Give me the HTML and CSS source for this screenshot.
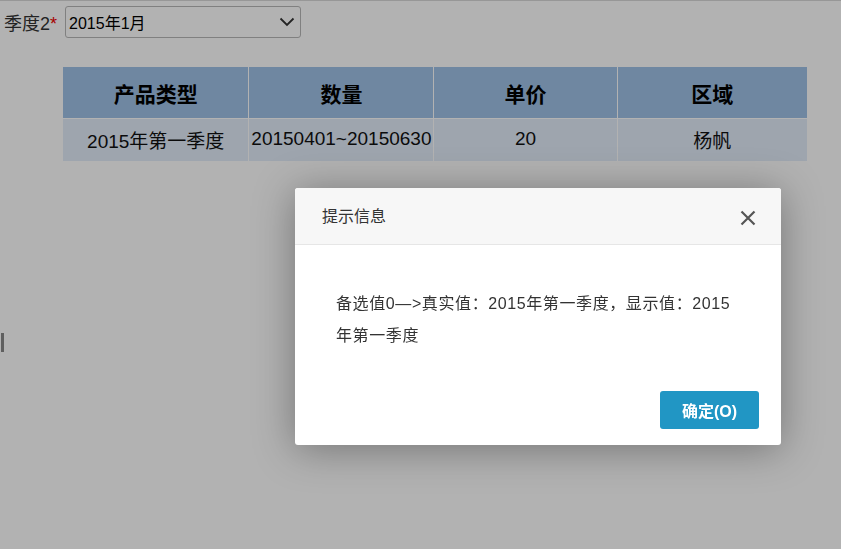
FILE: index.html
```html
<!DOCTYPE html>
<html>
<head>
<meta charset="utf-8">
<link rel="stylesheet" href="styles.css">
</head>
<body>
  <div class="filter">
    <span class="label">季度2<em>*</em></span>
    <div class="select">
      <span>2015年1月</span>
      <svg width="16" height="10" viewBox="0 0 16 10"><path d="M1.5 1.5 L8 8 L14.5 1.5" fill="none" stroke="#333" stroke-width="1.8"/></svg>
    </div>
  </div>

  <table class="report">
    <tr class="head">
      <th class="c1">产品类型</th>
      <th class="c2">数量</th>
      <th class="c3">单价</th>
      <th class="c4">区域</th>
    </tr>
    <tr class="data">
      <td>2015年第一季度</td>
      <td>20150401~20150630</td>
      <td>20</td>
      <td>杨帆</td>
    </tr>
  </table>

  <div class="handle"></div>
  <div class="mask"></div>

  <div class="dialog">
    <div class="dlg-head">
      <span class="dlg-title">提示信息</span>
      <svg class="dlg-close" width="16" height="16" viewBox="0 0 16 16"><path d="M1.5 1.5 L14.5 14.5 M14.5 1.5 L1.5 14.5" stroke="#555" stroke-width="2.2"/></svg>
    </div>
    <div class="dlg-body">备选值0—>真实值：2015年第一季度，显示值：2015年第一季度</div>
    <div class="dlg-foot">
      <button class="btn-ok">确定(O)</button>
    </div>
  </div>
</body>
</html>
```

FILE: styles.css
```css
body {
    margin: 0;
    background: #fff;
    border-top: 1px solid #d8d8d8;
    font-family: "Liberation Sans", "Noto Sans CJK SC", sans-serif;
    color: #222;
    height: 548px;
}
.filter {
    display: flex;
    align-items: center;
    padding: 5px 0 0 4px;
}
.label {
    font-size: 18px;
    color: #333;
    margin-right: 8px;
}
.label em {
    font-style: normal;
    color: #e00;
}
.select {
    width: 226px;
    height: 30px;
    border: 1px solid #b8b8b8;
    border-radius: 3px;
    display: flex;
    align-items: center;
    justify-content: space-between;
    padding: 0 5px 0 3px;
    font-size: 16px;
    color: #000;
}

.report {
    margin: 28px 0 0 62px;
    border-collapse: collapse;
    width: 746px;
}
.report th, .report td {
    border: 1px solid #fff;
    text-align: center;
    padding: 0;
    white-space: nowrap;
}
.head th {
    background: #9fc2e7;
    height: 51px;
    font-size: 21px;
    font-weight: bold;
    color: #000;
}
.c1 { width: 186px; }
.c2 { width: 184px; }
.c3 { width: 184px; }
.c4 { width: 191px; }
.data td {
    background: #e2ecf9;
    height: 40px;
    font-size: 19px;
    color: #111;
    padding-bottom: 2px;
}

.handle {
    position: absolute;
    left: 1px;
    top: 333px;
    width: 3px;
    height: 19px;
    background: #888;
}
.mask {
    position: fixed;
    inset: 0;
    background: rgba(0, 0, 0, 0.3);
}
.dialog {
    position: absolute;
    left: 295px;
    top: 188px;
    width: 486px;
    height: 257px;
    background: #fff;
    border-radius: 3px;
    box-shadow: 0 4px 40px rgba(0, 0, 0, 0.35);
    display: flex;
    flex-direction: column;
}
.dlg-head {
    height: 56px;
    background: #f7f7f7;
    border-bottom: 1px solid #e6e6e6;
    border-radius: 3px 3px 0 0;
    display: flex;
    align-items: center;
    justify-content: space-between;
    padding: 0 25px 0 27px;
}
.dlg-title {
    font-size: 16px;
    color: #333;
    margin-top: -2px;
}
.dlg-close { margin-top: 4px; }
.dlg-body {
    padding: 43px 49px 0 41px;
    font-size: 16px;
    letter-spacing: 0.6px;
    line-height: 32px;
    color: #333;
    flex: 1;
}
.dlg-foot {
    display: flex;
    justify-content: flex-end;
    padding: 0 22px 16px 0;
}
.btn-ok {
    width: 99px;
    height: 38px;
    border: none;
    border-radius: 3px;
    background: #2196c4;
    color: #fff;
    font-family: "Liberation Sans", "Noto Sans CJK SC", sans-serif;
    font-size: 16px;
    font-weight: bold;
}
```
